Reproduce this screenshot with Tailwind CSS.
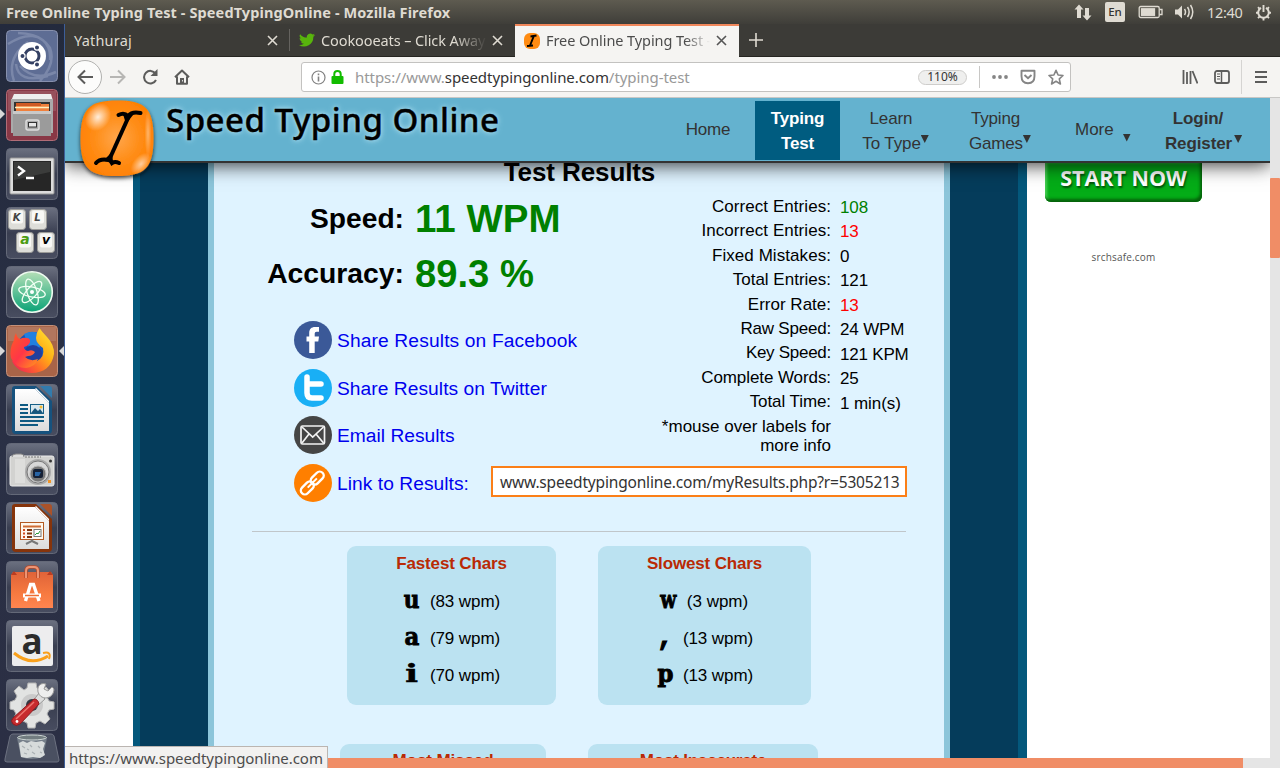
<!DOCTYPE html>
<html lang="en">
<head>
<meta charset="utf-8">
<title>Free Online Typing Test - SpeedTypingOnline</title>
<script src="https://cdn.jsdelivr.net/npm/@tailwindcss/browser@4"></script>
</head>
<body class="w-[1280px] h-[768px] overflow-hidden bg-white text-black font-['Noto_Sans',sans-serif]">
<div class="flex h-[768px] w-[1280px] flex-col">

<!-- System bar -->
<header class="flex h-6 shrink-0 items-center justify-between bg-linear-to-b from-[#5e5b50] to-[#3f3e39] pl-[6px] pr-2 text-[#dfdbd2]">
  <div class="whitespace-nowrap text-[14.500px] leading-6 font-bold tracking-[0.110px]">Free Online Typing Test - SpeedTypingOnline - Mozilla Firefox</div>
  <div class="flex items-center">
    <svg class="mr-[12px] h-5 w-5" viewBox="0 0 20 20" fill="#dfdbd2"><path d="M6 2.500L1.500 7.500H4V16H8V7.500H10.500ZM14 18.500L9.500 13.500H12V6H16V13.500H18.500Z"/></svg>
    <div class="mr-[13px] flex h-5 w-5 items-center justify-center rounded-[2px] bg-[#dfdbd2] text-[11.500px] font-medium text-[#33322e]">En</div>
    <svg class="mr-[11px] h-4 w-[25px]" viewBox="0 0 25 16" fill="none" stroke="#dfdbd2" stroke-width="1.300"><rect x="1.200" y="2.500" width="20" height="11" rx="1.500"/><path d="M21.500 5.500H24V10.500H21.500"/><rect x="3.500" y="4.800" width="13" height="6.500" fill="#dfdbd2"/></svg>
    <svg class="mr-[12px] h-[18px] w-[21px]" viewBox="0 0 21 18"><path d="M1 6.500H4L8 2.500V15.500L4 11.500H1Z" fill="#dfdbd2"/><path d="M10.500 6Q12.500 9 10.500 12M13.500 4Q16.800 9 13.500 14M16.500 2Q21 9 16.500 16" fill="none" stroke="#dfdbd2" stroke-width="1.500"/></svg>
    <div class="mr-[12px] w-[36px] text-[14.500px] leading-6 whitespace-nowrap tracking-[-0.300px]">12:40</div>
    <svg class="h-[17px] w-[17px]" viewBox="0 0 17 17" fill="none" stroke="#dfdbd2"><path d="M6 3.800A5.300 5.300 0 1 0 11 3.800" stroke-width="2"/><path d="M8.500 1V8M1 8.700H3.500M13.500 8.700H16M3 3.200L4.600 4.800M14 3.200L12.400 4.800M3 14.200L4.800 12.400M14 14.200L12.200 12.400M8.500 13.500V16.500" stroke-width="1.900"/></svg>
  </div>
</header>

<div class="flex min-h-0 flex-1">

<!-- Launcher -->
<nav class="relative flex w-[65px] shrink-0 flex-col items-center gap-[7px] border-r border-[#3d5e99] bg-linear-to-b from-[#232a3d] via-[#2a3045] to-[#2b2f44] pt-[6px]">
  <svg class="h-[52px] w-[52px] shrink-0" viewBox="0 0 52 52">
    <defs>
      <linearGradient id="tile" x1="0" y1="0" x2="0" y2="1"><stop offset="0" stop-color="#6b7080"/><stop offset=".45" stop-color="#3f4456"/><stop offset=".5" stop-color="#393e50"/><stop offset="1" stop-color="#484d60"/></linearGradient>
      <linearGradient id="paper" x1="0" y1="0" x2="0" y2="1"><stop offset="0" stop-color="#fff"/><stop offset="1" stop-color="#dcdcdc"/></linearGradient>
    </defs>
    <rect x=".5" y=".5" width="51" height="51" rx="4" fill="#5e6d94" stroke="#8790ad"/>
    <path d="M2 14Q30 -4 44 18Q50 34 34 51M8 51Q0 28 22 12M12 3Q46 4 44 30M50 42Q28 52 14 36M10 34Q12 54 42 46" fill="none" stroke="#a6afc7" stroke-opacity=".4" stroke-width="2.500"/>
    <circle cx="26" cy="26" r="14" fill="#fff"/><circle cx="26" cy="26" r="7" fill="none" stroke="#344063" stroke-width="3"/><g fill="#344063" stroke="#fff" stroke-width="1.200"><circle cx="16.500" cy="26" r="2.600"/><circle cx="31" cy="17.500" r="2.600"/><circle cx="31" cy="34.500" r="2.600"/></g>
  </svg>
  <svg class="h-[52px] w-[52px] shrink-0" viewBox="0 0 52 52">
    <rect x=".5" y=".5" width="51" height="51" rx="4" fill="#893846" stroke="#b16c77"/><path d="M2 2H50V22H2Z" fill="#fff" opacity=".12"/>
    <path d="M8 5H45L47 12H5Z" fill="#eee"/><path d="M5 10H47V44H5Z" fill="#aaa"/><path d="M8 13H44V23H8Z" fill="#333"/><path d="M10 15H43V22H10Z" fill="#f0803c"/><path d="M10 14H35V17H10Z" fill="#cf5a24"/><path d="M9 18.500H43" stroke="#fff0c0" stroke-width="1.500"/><rect x="7" y="22" width="38" height="25" fill="#9b9b9b"/><path d="M7 22H45V25H7Z" fill="#c9c9c9"/><rect x="20" y="31" width="13" height="10" rx="2" fill="#ababab" stroke="#ddd" stroke-width="1.500"/><rect x="22.500" y="33.500" width="8" height="4.500" fill="#e7e7e7" stroke="#333"/>
  </svg>
  <svg class="h-[52px] w-[52px] shrink-0" viewBox="0 0 52 52">
    <rect x=".5" y=".5" width="51" height="51" rx="4" fill="url(#tile)" stroke="#646978"/><rect x="4" y="10" width="44" height="36" rx="1" fill="#dcdcdc" stroke="#999"/><rect x="7" y="13" width="38" height="30" fill="#262626"/><path d="M8 14H44V24L8 32Z" fill="#3b3c3b"/><path d="M12 18.500L18 23L12 27.500M20 30H28" fill="none" stroke="#fff" stroke-width="2.300"/>
  </svg>
  <svg class="h-[52px] w-[52px] shrink-0" viewBox="0 0 52 52">
    <rect x=".5" y=".5" width="51" height="51" rx="4" fill="url(#tile)" stroke="#646978"/>
    <g fill="#deded9" stroke="#9b9b98"><rect x="2.500" y="2.500" width="17" height="20" rx="3"/><rect x="23.500" y="2.500" width="17" height="20" rx="3"/><rect x="10.500" y="25.500" width="17" height="20" rx="3"/><rect x="31.500" y="25.500" width="17" height="20" rx="3"/></g>
    <g fill="#f8f8f5"><rect x="5" y="3.500" width="12" height="13" rx="2"/><rect x="26" y="3.500" width="12" height="13" rx="2"/><rect x="13" y="26.500" width="12" height="14" rx="2"/><rect x="34" y="26.500" width="12" height="14" rx="2"/></g>
    <g font-family="DejaVu Sans" font-style="italic" font-weight="bold" fill="#444" text-anchor="middle"><text x="10.500" y="13.500" font-size="10">K</text><text x="31.500" y="13.500" font-size="10">L</text><text x="19" y="36.500" font-size="14" fill="#4b9c12">a</text><text x="40" y="36.500" font-size="12.500" fill="#000">v</text></g>
  </svg>
  <svg class="h-[52px] w-[52px] shrink-0" viewBox="0 0 52 52">
    <defs><linearGradient id="atom" x1="0" y1="0" x2="0" y2="1"><stop offset="0" stop-color="#b5dfb7"/><stop offset="1" stop-color="#0aa376"/></linearGradient></defs>
    <rect x=".5" y=".5" width="51" height="51" rx="4" fill="url(#tile)" stroke="#646978"/><circle cx="26" cy="26" r="20.300" fill="url(#atom)" stroke="#eefaf0" stroke-width="1.600"/><g fill="none" stroke="#f2fff4" stroke-width="1.300"><ellipse cx="26" cy="26" rx="13.500" ry="5" transform="rotate(12 26 26)"/><ellipse cx="26" cy="26" rx="13.500" ry="5" transform="rotate(72 26 26)"/><ellipse cx="26" cy="26" rx="13.500" ry="5" transform="rotate(132 26 26)"/></g><circle cx="26" cy="26" r="2" fill="#fff"/>
  </svg>
  <svg class="h-[52px] w-[52px] shrink-0" viewBox="0 0 52 52">
    <defs><linearGradient id="fox" x1="1" y1="0" x2="0" y2="1"><stop offset="0" stop-color="#ffed3b"/><stop offset=".4" stop-color="#ffae15"/><stop offset=".65" stop-color="#ff662b"/><stop offset="1" stop-color="#ed155d"/></linearGradient>
    <linearGradient id="foxhead" x1="0" y1="0" x2="1" y2="1"><stop offset="0" stop-color="#ff5b25"/><stop offset=".5" stop-color="#ff3647"/><stop offset="1" stop-color="#ff9a1c"/></linearGradient></defs>
    <rect x=".5" y=".5" width="51" height="51" rx="4" fill="#a86448" stroke="#c39079"/><path d="M2 2H50V16H2Z" fill="#fff" opacity=".12"/>
    <circle cx="27" cy="23" r="16" fill="#1456c0"/><path d="M18 9Q30 3 38 13Q35 25 25 28Z" fill="#2180e0"/><circle cx="27" cy="29" r="9" fill="#213f9e"/>
    <path d="M33.500 3Q36 7 41 12Q48.500 20 48 29C46 42 37 48 26 48C16 48 9 43 6 36L18 31Q23 39 31 36Q39 32 37 23Q30 18 30 13Q30 8 33.500 3Z" fill="url(#fox)"/>
    <path d="M10 8Q11 13 14 14Q18 12 23 13.500Q26 17 21 21L18 22Q18 25 22 26Q26 24 29 27Q27 31 22 31L19 32Q24 37 32 34Q29 42 20 43Q10 43 5 33Q3 24 8 15Q8 11 10 8Z" fill="url(#foxhead)"/>
  </svg>
  <svg class="h-[52px] w-[52px] shrink-0" viewBox="0 0 52 52">
    <rect x=".5" y=".5" width="51" height="51" rx="4" fill="url(#tile)" stroke="#646978"/><path d="M9 2H30L46 17V46Q46 50 42 50H10Q6 50 6 46V5Q6 2 9 2Z" fill="#16527e"/><path d="M34 2H43Q46 2 46 5V14Z" fill="#327bad"/><path d="M9 5H29L43 19V47H9Z" fill="url(#paper)"/><path d="M29 5L43 19V17L30 4Z" fill="#fff"/><path d="M14 21H22M14 25H22M14 29H22M14 33H38M14 37H38M14 41H32" stroke="#0e5a82" stroke-width="2"/><rect x="24.500" y="20.500" width="13" height="9" fill="#d8e7ee" stroke="#176087"/><path d="M25 29L29 24L32 27L34 25L37 29Z" fill="#17557b"/><circle cx="35" cy="23" r="1.500" fill="#f6b930"/>
  </svg>
  <svg class="h-[52px] w-[52px] shrink-0" viewBox="0 0 52 52">
    <rect x=".5" y=".5" width="51" height="51" rx="4" fill="url(#tile)" stroke="#646978"/><rect x="4" y="13" width="44" height="30" rx="2" fill="#d2d2d0" stroke="#ececec"/><path d="M6 14Q6 11 10 11H15Q18 11 18 14" fill="#ddd" stroke="#888"/><path d="M19 14H35" stroke="#777" stroke-dasharray="2 1"/><rect x="9" y="16" width="10" height="24" fill="#dededc"/><circle cx="32" cy="29" r="13" fill="#aaa"/><circle cx="32" cy="29" r="11" fill="#d8d8d8" stroke="#777"/><circle cx="32" cy="31" r="8" fill="#777" stroke="#bbb"/><rect x="27" y="26" width="10" height="9" rx="2" fill="#152035"/><path d="M29 29H35L33 33H29Z" fill="#2864a5"/><circle cx="44.500" cy="18" r="1.500" fill="#333"/><rect x="42" y="37" width="3" height="3" fill="#f29527"/>
  </svg>
  <svg class="h-[52px] w-[52px] shrink-0" viewBox="0 0 52 52">
    <rect x=".5" y=".5" width="51" height="51" rx="4" fill="url(#tile)" stroke="#646978"/><path d="M9 2H30L46 17V46Q46 50 42 50H10Q6 50 6 46V5Q6 2 9 2Z" fill="#86340b"/><path d="M34 2H43Q46 2 46 5V14Z" fill="#aa5229"/><path d="M9 5H29L43 19V47H9Z" fill="url(#paper)"/><path d="M29 5L43 19V17L30 4Z" fill="#fff"/><rect x="14.500" y="20.500" width="23" height="17" fill="#fff8ee" stroke="#b35a22"/><path d="M17 24.500H35" stroke="#cf6d35" stroke-width="2"/><path d="M17 28H19M17 31.500H19M17 35H19" stroke="#d34d20" stroke-width="2"/><path d="M21 28H26M21 31.500H26M21 35H26" stroke="#7e360e" stroke-width="2"/><rect x="28" y="27.500" width="7" height="7" fill="#fff" stroke="#777"/><path d="M29 33L31 31L32 32L34 29" fill="none" stroke="#2a9d3c"/><path d="M26 37V39L20 42M26 39L32 42" fill="none" stroke="#777" stroke-width="2"/>
  </svg>
  <svg class="h-[52px] w-[52px] shrink-0" viewBox="0 0 52 52">
    <defs><linearGradient id="bag" x1="0" y1="0" x2="0" y2="1"><stop offset="0" stop-color="#df6339"/><stop offset=".6" stop-color="#f77a40"/><stop offset="1" stop-color="#ff8550"/></linearGradient></defs>
    <rect x=".5" y=".5" width="51" height="51" rx="4" fill="url(#tile)" stroke="#646978"/><path d="M7 11H45L47 14V47H5V14Z" fill="url(#bag)"/><path d="M5 14L8 10L11 14ZM41 14L44 10L47 14Z" fill="#b93c21"/><path d="M20 17V10Q20 6 24 6H28Q32 6 32 10V17" fill="none" stroke="#b44b2d" stroke-width="3.500"/><path d="M20 17V10Q20 6 24 6H28Q32 6 32 10V17" fill="none" stroke="#ee9473" stroke-width="2"/><path d="M19.500 40L24.500 23.500H27.500L33 40" fill="none" stroke="#fff" stroke-width="3.300"/><path d="M17 34.500H35" stroke="#fff" stroke-width="4"/><path d="M19 34.500H33" stroke="#ee6d32" stroke-width="1.500"/>
  </svg>
  <svg class="h-[52px] w-[52px] shrink-0" viewBox="0 0 52 52">
    <rect x=".5" y=".5" width="51" height="51" rx="4" fill="url(#tile)" stroke="#646978"/><rect x="6" y="6" width="41" height="40" rx="2" fill="#ededee"/><text x="26" y="33.500" text-anchor="middle" font-family="Open Sans" font-size="35" font-weight="bold" fill="#2c2c2c">a</text><path d="M8 33Q25 47 42 36" fill="none" stroke="#f9a01b" stroke-width="3"/><path d="M37 33Q46 31 43 39" fill="none" stroke="#f9a01b" stroke-width="2"/>
  </svg>
  <svg class="h-[52px] w-[52px] shrink-0" viewBox="0 0 52 52">
    <rect x=".5" y=".5" width="51" height="51" rx="4" fill="url(#tile)" stroke="#646978"/><path d="M22 4H30L31 9L35 11L40 8L44 13L41 18L43 22L48 23V30L43 31L41 35L44 40L39 45L34 42L30 44L29 49H22L21 44L17 42L12 45L7 40L10 35L8 31L4 30V23L9 21L11 17L8 12L13 7L18 11L21 9Z" fill="#e2e3e2" stroke="#b3b3b3"/><circle cx="26" cy="26" r="11" fill="#cacaca"/><circle cx="26" cy="26" r="6" fill="#333742"/><path d="M33 14L24 26L28 30L39 20Z" fill="#ddd" stroke="#999"/><path d="M35 5Q31 7 32 13Q34 19 40 19Q47 18 48 11Q48 9 46 8L42 12L38 10L40 5Q37 4 35 5Z" fill="#eee" stroke="#999"/><path d="M7 39L28 20Q32 20 33 25L14 45Q10 48 7 45Q4 42 7 39Z" fill="#c72b2e" stroke="#8c1c20"/><path d="M10 40L28 23" stroke="#ed7770" stroke-width="1.500"/><circle cx="11" cy="42.500" r="1.400" fill="#fff"/>
  </svg>
  <svg class="-mt-[5px] h-[32px] w-[58px] shrink-0" viewBox="0 0 58 32">
    <path d="M10 1H48Q50 1 51 3L56 27Q56 29 54 29H4Q1 29 2 26L7 3Q8 1 10 1Z" fill="#4a5061" stroke="#6c7180"/><path d="M14 5L18 24Q28 28 40 24L44 5Z" fill="#87919a" opacity=".7"/><ellipse cx="29" cy="4.500" rx="14.500" ry="2.500" fill="#727d80" stroke="#cbd4d2"/><path d="M16 10L20 8L24 10L28 8L33 9L39 8L42 10L40 16L42 22L37 25L30 24L24 25L18 24L17 17Z" fill="#d7dbdb"/><path d="M19 13L22 15M21 20L24 21M27 12L29 14M29 19L32 21M35 13L37 15M37 19L39 20M24 16L26 17" fill="none" stroke="#aab0b3" stroke-width="1.200"/>
  </svg>
  <svg class="absolute top-[84px] left-0 h-3 w-[6px]" viewBox="0 0 6 12"><path d="M0 1L5 6L0 11Z" fill="#d8d8d8"/></svg>
  <svg class="absolute top-[321px] left-0 h-3 w-[6px]" viewBox="0 0 6 12"><path d="M0 1L5 6L0 11Z" fill="#d8d8d8"/></svg>
  <svg class="absolute top-[321px] right-0 h-3 w-[6px]" viewBox="0 0 6 12"><path d="M6 1L1 6L6 11Z" fill="#d8d8d8"/></svg>
</nav>

<!-- Browser window -->
<main class="relative flex min-w-0 flex-1 flex-col">

  <!-- Tabs -->
  <div class="flex h-[33px] shrink-0 border-b border-[#262521] bg-[#3c3b37] text-[14.500px] leading-[33px] whitespace-nowrap text-[#dfdbd2]">
    <div class="flex w-[224px] items-center pr-[11px] pl-[9px]">
      <span class="flex-1 tracking-[0.200px]">Yathuraj</span>
      <svg class="h-[11px] w-[11px]" viewBox="0 0 11 11" stroke="#dfdbd2" stroke-width="1.600"><path d="M1 1L10 10M10 1L1 10"/></svg>
    </div>
    <div class="my-[5px] w-px bg-[#65635f]"></div>
    <div class="flex w-[224px] items-center pr-[11px] pl-[9px]">
      <svg class="mr-[6px] h-4 w-4 shrink-0" viewBox="0 0 24 24" fill="#58b40c"><path d="M24 4.600a10 10 0 0 1-2.800.8 5 5 0 0 0 2.200-2.700 10 10 0 0 1-3.100 1.200 4.900 4.900 0 0 0-8.400 4.500A14 14 0 0 1 1.700 3.200a4.900 4.900 0 0 0 1.500 6.500 5 5 0 0 1-2.200-.6 4.900 4.900 0 0 0 4 4.900 5 5 0 0 1-2.300.1 4.900 4.900 0 0 0 4.600 3.400A10 10 0 0 1 0 19.500 14 14 0 0 0 21.500 7.100 10 10 0 0 0 24 4.600z"/></svg>
      <span class="min-w-0 flex-1 overflow-hidden mask-r-from-80% tracking-[-0.100px]">Cookooeats – Click Away</span>
      <svg class="ml-[5px] h-[11px] w-[11px] shrink-0" viewBox="0 0 11 11" stroke="#dfdbd2" stroke-width="1.600"><path d="M1 1L10 10M10 1L1 10"/></svg>
    </div>
    <div class="-mb-px ml-px flex w-[224px] items-center border-t-2 border-[#f0875b] bg-[#f5f4f2] pr-[12px] pl-[9px] leading-[30px] text-[#4c4c4c]">
      <svg class="mr-[6px] mb-[2px] h-4 w-4 shrink-0" viewBox="0 0 16 16"><rect width="16" height="16" rx="6" fill="#ff8b12"/><path d="M6.500 3.500L12.500 2.500M9.800 3.200L6 12.500M3 13L9 12.500" stroke="#000" stroke-width="1.900"/></svg>
      <span class="mb-[3px] min-w-0 flex-1 overflow-hidden mask-r-from-85% tracking-[-0.080px]">Free Online Typing Test -</span>
      <svg class="mb-[2px] ml-[6px] h-[11px] w-[11px] shrink-0" viewBox="0 0 11 11" stroke="#555" stroke-width="1.600"><path d="M1 1L10 10M10 1L1 10"/></svg>
    </div>
    <svg class="mt-[9px] ml-[10px] h-[14px] w-[14px]" viewBox="0 0 14 14" stroke="#dfdbd2" stroke-width="1.600"><path d="M7 0V14M0 7H14"/></svg>
  </div>

  <!-- Navigation toolbar -->
  <div class="flex h-[41px] shrink-0 items-center border-b border-[#c8c7c5] bg-[#f5f4f2]">
    <div class="ml-[3px] flex h-[34px] w-[34px] items-center justify-center rounded-full border border-[#b1b1af] bg-[#fcfcfb]"><svg class="h-4 w-4" viewBox="0 0 16 16" fill="none" stroke="#5c5c5b" stroke-width="2"><path d="M16 8H1.500M8 1.500L1.500 8L8 14.500"/></svg></div>
    <svg class="ml-[8px] h-4 w-4" viewBox="0 0 16 16" fill="none" stroke="#b7b6b4" stroke-width="2"><path d="M0 8H14.500M8 1.500L14.500 8L8 14.500"/></svg>
    <svg class="ml-[16px] h-4 w-4" viewBox="0 0 16 16" fill="none" stroke="#5c5c5b" stroke-width="2"><path d="M13.500 4.500A6.300 6.300 0 1 0 14 11"/><path d="M15.500 0V7H8.500Z" fill="#5c5c5b" stroke="none"/></svg>
    <svg class="ml-[16px] h-4 w-4" viewBox="0 0 16 16"><path d="M1 8.300L8 1.500L15 8.300M3 7.500V14.800H13V7.500" fill="none" stroke="#5c5c5b" stroke-width="2" stroke-linejoin="round"/><path d="M6 9H10V15H6Z" fill="#5c5c5b"/><path d="M8.200 11H9V12.500H8.200Z" fill="#fff"/></svg>
    <div class="ml-[111px] flex h-[30px] w-[770px] items-center rounded-[3px] border border-[#c3c2c0] bg-white pl-[9px]">
      <svg class="h-[15px] w-[15px]" viewBox="0 0 15 15" fill="none" stroke="#828282"><circle cx="7.500" cy="7.500" r="6.500" stroke-width="1.200"/><path d="M7.500 6.500V11.500M7.500 3.500V5.200" stroke-width="1.600"/></svg>
      <svg class="ml-[5px] h-[14px] w-[13px]" viewBox="0 0 13 14"><rect x=".5" y="6" width="12" height="8" rx="1" fill="#12bc00"/><path d="M3.300 7V4Q3.300 1 6.500 1Q9.700 1 9.700 4V7" fill="none" stroke="#12bc00" stroke-width="2"/></svg>
      <div class="ml-[11px] w-[560px] text-[15px] tracking-[-0.060px] whitespace-nowrap text-[#999]">https://www.<span class="text-[#333]">speedtypingonline.com</span>/typing-test</div>
      <div class="ml-[3px] flex h-[15px] w-[49px] items-center justify-center rounded-full border border-[#cecdcb] bg-[#efefee] text-[12px] text-[#333]">110%</div>
      <div class="ml-[12px] h-[22px] w-px bg-[#c8c7c5]"></div>
      <svg class="ml-[12px] h-4 w-4" viewBox="0 0 16 16" fill="#858585"><circle cx="2" cy="8" r="1.900"/><circle cx="8" cy="8" r="1.900"/><circle cx="14" cy="8" r="1.900"/></svg>
      <svg class="ml-[12px] h-4 w-4" viewBox="0 0 16 16" fill="none" stroke="#858585" stroke-width="1.900"><path d="M1.500 1.800H14.500V7Q14.500 14.200 8 14.200Q1.500 14.200 1.500 7Z" stroke-linejoin="round"/><path d="M4.500 6L8 9.300L11.500 6"/></svg>
      <svg class="ml-[12px] h-[17px] w-4" viewBox="0 0 16 17" fill="none" stroke="#858585" stroke-width="1.600" stroke-linejoin="round"><path d="M8 1.300L10.100 6L15 6.500L11.300 9.900L12.400 15L8 12.300L3.600 15L4.700 9.900L1 6.500L5.900 6Z"/></svg>
    </div>
    <svg class="ml-[111px] h-4 w-4" viewBox="0 0 16 16" stroke="#5c5c5b" stroke-width="1.800"><path d="M1.500 1V15M5 3V15M8.500 2V15M10.500 2L15.500 14.500"/></svg>
    <svg class="ml-[16px] h-4 w-4" viewBox="0 0 16 16" fill="none" stroke="#5c5c5b" stroke-width="1.800"><rect x="1" y="2" width="14" height="12" rx="2"/><path d="M7.500 2V14" stroke-width="1.500"/><path d="M3 5H6M3 7.500H6M3 10H6" stroke-width="1"/></svg>
    <div class="ml-[11px] h-[34px] w-px bg-[#d5d4d2]"></div>
    <svg class="ml-[12px] h-4 w-[14px]" viewBox="0 0 14 16" stroke="#5c5c5b" stroke-width="2"><path d="M1 3H13M1 8H13M1 13H13"/></svg>
  </div>

  <!-- Page viewport -->
  <div class="flex min-h-0 flex-1 flex-col">
    <div class="flex min-h-0 flex-1">
      <div class="relative flex min-w-0 flex-1 flex-col overflow-hidden font-['Liberation_Sans',Arial,sans-serif]">

        <!-- Site header -->
        <div class="relative z-10 flex h-[65px] shrink-0 border-b-2 border-[#333] bg-[#64b2cf] text-[17px] leading-[25px] text-[#333] shadow-[0_2px_18px_rgba(0,0,0,0.8)]">
          <svg class="-mb-5 ml-[10px] h-[90px] w-[85px] shrink-0" viewBox="0 0 85 90">
            <defs>
              <radialGradient id="orb" cx=".5" cy=".5" r=".65"><stop offset="0" stop-color="#ffa64b"/><stop offset=".5" stop-color="#ff8c15"/><stop offset=".9" stop-color="#ff7e00"/></radialGradient>
              <radialGradient id="gl"><stop offset="0" stop-color="#fff" stop-opacity=".85"/><stop offset="1" stop-color="#fff" stop-opacity="0"/></radialGradient>
              <filter id="drop" x="-20%" y="-20%" width="140%" height="140%"><feDropShadow dx="0" dy="2" stdDeviation="2" flood-color="#000" flood-opacity=".75"/></filter>
            </defs>
            <path d="M42 2.500C69 2.500 78.500 9 78.500 40C78.500 70 70 78 42 78C15 78 5.500 71 5.500 41C5.500 10 15 2.500 42 2.500Z" fill="url(#orb)" filter="url(#drop)"/>
            <ellipse cx="23" cy="19" rx="12" ry="15" fill="url(#gl)" transform="rotate(35 23 19)"/><ellipse cx="66" cy="66" rx="8" ry="13" fill="url(#gl)" opacity=".7" transform="rotate(40 66 66)"/><ellipse cx="73" cy="35" rx="3.500" ry="25" fill="url(#gl)" opacity=".45"/>
            <path d="M53.500 19L35 60" stroke="#000" stroke-width="4"/><path d="M43.500 17Q49 14 53 18Q57 13 65.500 15M21 65Q25 60 34 62Q36 63 37 65Q40 63 44 65" fill="none" stroke="#000" stroke-width="4" stroke-linecap="round"/><path d="M48 16L58 17L51 26ZM37 54L38 64L28 63Z" fill="#000"/>
          </svg>
          <div class="ml-[6px] w-[515px] text-[33px] leading-[43px] font-medium tracking-[0.500px] whitespace-nowrap text-black [text-shadow:0_0_4px_#a9dcee,0_0_7px_#a9dcee] [-webkit-text-stroke:0.400px_#000] font-['Noto_Sans',sans-serif]">Speed Typing Online</div>
          <div class="-ml-[13px] flex w-[92px] items-center justify-center pr-[12px]"><span class="tracking-[-0.200px]">Home</span></div>
          <div class="mt-[3px] mb-px -ml-[5px] w-[85px] bg-[#005c80] pt-[5px] text-center font-bold tracking-[-0.200px] text-white">Typing<br>Test</div>
          <div class="w-[110px] pt-[8px] pr-[8px] text-center tracking-[-0.100px]">Learn<br><span class="-mr-[9px] whitespace-nowrap">To Type<span class="inline-block h-2 w-2 -translate-y-[6px] bg-[#333] [clip-path:polygon(0_0,100%_0,50%_100%)]"></span></span></div>
          <div class="w-[99px] pt-[8px] pr-[8px] text-center tracking-[-0.200px]">Typing<br><span class="-mr-[9px] whitespace-nowrap">Games<span class="inline-block h-2 w-2 -translate-y-[6px] bg-[#333] [clip-path:polygon(0_0,100%_0,50%_100%)]"></span></span></div>
          <div class="flex w-[83px] items-center pl-[26px]"><span>More</span><span class="mt-4 ml-[9px] h-2 w-2 shrink-0 bg-[#333] [clip-path:polygon(0_0,100%_0,50%_100%)]"></span></div>
          <div class="w-[110px] shrink-0 pt-[8px] pl-[22px] text-center font-bold tracking-[-0.100px]">Login/<br><span class="-mr-[11px] whitespace-nowrap">Register<span class="ml-[2px] inline-block h-2 w-2 -translate-y-[6px] bg-[#333] [clip-path:polygon(0_0,100%_0,50%_100%)]"></span></span></div>
        </div>

        <div class="flex min-h-0 flex-1">
          <div class="w-[68px] shrink-0 bg-white"></div>
          <div class="w-[75px] shrink-0 border-l-[7px] border-[#04587c] bg-[#053c5b]"></div>

          <!-- Results -->
          <div class="flex w-[742px] shrink-0 flex-col overflow-hidden border-x-[6px] border-[#8cc5da] bg-[#dff3ff]">
            <h1 class="-mt-[6px] pl-[1px] text-center text-[26px] leading-[30px] font-bold tracking-[-0.100px]">Test Results</h1>
            <div class="flex h-[344px] shrink-0">
              <div class="flex w-[422px] shrink-0 flex-col">
                <div class="mt-[4px] flex h-[55px] items-center font-bold"><div class="w-[190px] text-right text-[28.200px]">Speed:</div><div class="ml-[11px] text-[38.500px] text-[#008000]">11 WPM</div></div>
                <div class="flex h-[55px] items-center font-bold"><div class="w-[190px] text-right text-[28.300px]">Accuracy:</div><div class="ml-[11px] text-[38.200px] text-[#008000]">89.3 %</div></div>
                <div class="mt-[15px] ml-[80px] flex flex-col text-[19.200px] tracking-[0.140px] whitespace-nowrap text-[#0000ee]">
                  <div class="flex h-[48px] items-center gap-[5px]"><svg class="h-[38px] w-[38px]" viewBox="0 0 38 38"><circle cx="19" cy="19" r="19" fill="#3b5998"/><path d="M15.200 32V20.500H12.500V15.500H15.200V12C15.200 8 17.500 6 21 6H25V10.700H22.500Q20.700 10.700 20.700 12.500V15.500H25L24.300 20.500H20.700V32Z" fill="#fff"/></svg><span class="pt-[2px]">Share Results on Facebook</span></div>
                  <div class="flex h-[47px] items-center gap-[5px]"><svg class="h-[38px] w-[38px]" viewBox="0 0 38 38"><circle cx="19" cy="19" r="19" fill="#19aff5"/><path d="M13 8V24Q13 29 18 29H27M13 15H27" fill="none" stroke="#fff" stroke-width="5.500" stroke-linecap="round" stroke-linejoin="round"/></svg><span class="pt-[3px] tracking-[0.050px]">Share Results on Twitter</span></div>
                  <div class="flex h-[48px] items-center gap-[5px]"><svg class="h-[38px] w-[38px]" viewBox="0 0 38 38"><circle cx="19" cy="19" r="19" fill="#454545"/><g fill="none" stroke="#f2f2f2" stroke-width="1.700"><rect x="7" y="10" width="23.500" height="18" rx="1.500"/><path d="M8 11L18.700 21L29.500 11M8 27L15 18M29.500 27L22 18"/></g></svg><span class="pt-[2px] tracking-[0.020px]">Email Results</span></div>
                  <div class="flex h-[48px] items-center gap-[5px]"><svg class="h-[38px] w-[38px]" viewBox="0 0 38 38"><circle cx="19" cy="19" r="19" fill="#ff7f00"/><g fill="none" stroke="#fff" stroke-width="2.400" transform="rotate(-45 19 19)"><rect x="4" y="14.500" width="15" height="8" rx="4"/><rect x="18" y="14.500" width="15" height="8" rx="4"/><path d="M12 18.500H25" stroke-width="2"/></g></svg><span class="pt-[2px] tracking-[0.050px]">Link to Results:</span></div>
                </div>
              </div>
              <div class="-ml-[145px] flex w-[416px] flex-col">
                <div class="flex justify-end pt-[8px] text-[17px] tracking-[-0.080px] whitespace-nowrap">
                  <div class="text-right leading-[24.400px]">
                    <div class="tracking-[0.060px]">Correct Entries:</div><div class="tracking-[0.060px]">Incorrect Entries:</div><div class="tracking-[0.060px]">Fixed Mistakes:</div><div class="tracking-normal">Total Entries:</div><div class="tracking-normal">Error Rate:</div><div class="tracking-[-0.200px]">Raw Speed:</div><div class="tracking-[-0.280px]">Key Speed:</div><div>Complete Words:</div><div>Total Time:</div>
                    <div class="mt-[2px] leading-[19.500px] tracking-normal">*mouse over labels for<br>more info</div>
                  </div>
                  <div class="ml-[9px] w-[67px] leading-[24.500px] pt-[0.500px]">
                    <div class="text-[#008000]">108</div><div class="text-[#ff0000]">13</div><div>0</div><div>121</div><div class="text-[#ff0000]">13</div><div class="tracking-[-0.150px]">24 WPM</div><div class="tracking-[-0.200px]">121 KPM</div><div>25</div><div>1 min(s)</div>
                  </div>
                </div>
                <div class="mt-[10px] h-[31px] shrink-0 border-2 border-[#fb7f18] bg-white pl-[7px] text-[15.500px] leading-[29px] tracking-[-0.180px] whitespace-nowrap text-[#333] font-['Noto_Sans',sans-serif]">www.speedtypingonline.com/myResults.php?r=5305213</div>
              </div>
            </div>
            <div class="mr-[38px] ml-[38px] h-px shrink-0 bg-[#c0c6ca]"></div>
            <div class="mt-[14px] flex shrink-0 pl-[133px] text-[17px]">
              <div class="h-[159px] w-[209px] rounded-[9px] bg-[#bbe2f1] pt-[8px] text-center">
                <h2 class="leading-[19px] font-bold tracking-[-0.150px] text-[#b92a05]">Fastest Chars</h2>
                <div class="mt-[10px] leading-[37px] whitespace-nowrap">
                  <div class="flex h-[37px] items-center justify-center gap-[10px] pl-px"><b class="flex w-4 justify-center text-[24px] [-webkit-text-stroke:0.900px_#000] font-['DejaVu_Serif',serif]"><span class="-translate-y-[2px] scale-x-90">u</span></b><span class="tracking-[-0.080px]">(83 wpm)</span></div>
                  <div class="flex h-[37px] items-center justify-center gap-[10px] pl-px"><b class="flex w-4 justify-center text-[24px] [-webkit-text-stroke:0.900px_#000] font-['DejaVu_Serif',serif]"><span class="-translate-y-[2px] scale-x-95">a</span></b><span class="tracking-[-0.080px]">(79 wpm)</span></div>
                  <div class="flex h-[37px] items-center justify-center gap-[10px] pl-px"><b class="flex w-4 justify-center text-[24px] [-webkit-text-stroke:0.500px_#000] font-['DejaVu_Serif',serif]"><span class="-translate-y-[2px] scale-x-[1.4]">i</span></b><span class="tracking-[-0.080px]">(70 wpm)</span></div>
                </div>
              </div>
              <div class="ml-[42px] h-[159px] w-[213px] rounded-[9px] bg-[#bbe2f1] pt-[8px] text-center">
                <h2 class="leading-[19px] font-bold tracking-[-0.150px] text-[#b92a05]">Slowest Chars</h2>
                <div class="mt-[10px] leading-[37px] whitespace-nowrap">
                  <div class="flex h-[37px] items-center justify-center gap-[10px]"><b class="flex w-4 justify-center text-[24px] [-webkit-text-stroke:0.900px_#000] font-['DejaVu_Serif',serif]"><span class="-translate-y-[2px] scale-x-[0.78]">w</span></b><span>(3 wpm)</span></div>
                  <div class="flex h-[37px] items-center justify-center gap-[10px] pl-px"><b class="w-4 text-[27px] [-webkit-text-stroke:1px_#000] font-['Liberation_Mono',monospace]">,</b><span class="tracking-[-0.080px]">(13 wpm)</span></div>
                  <div class="flex h-[37px] items-center justify-center gap-[10px] pl-px"><b class="flex w-4 justify-center text-[24px] [-webkit-text-stroke:0.900px_#000] font-['DejaVu_Serif',serif]"><span class="-translate-y-[2px] scale-x-95">p</span></b><span class="tracking-[-0.080px]">(13 wpm)</span></div>
                </div>
              </div>
            </div>
            <div class="mt-[39px] flex shrink-0 pl-[126px] text-center text-[17px] font-bold text-[#b92a05]">
              <div class="h-[60px] w-[206px] rounded-[9px] bg-[#bbe2f1] pt-[7px] leading-[19px] tracking-[-0.100px]">Most Missed</div>
              <div class="ml-[42px] h-[60px] w-[230px] rounded-[9px] bg-[#bbe2f1] pt-[7px] leading-[19px] tracking-[-0.200px]">Most Inaccurate</div>
            </div>
          </div>

          <div class="w-[77px] shrink-0 border-r-[9px] border-[#04587c] bg-[#053c5b]"></div>

          <!-- Advertisement -->
          <div class="flex-1 bg-white pl-[18px] font-['Open_Sans',sans-serif]">
            <div class="h-[39px] w-[157px] rounded-b-[6px] bg-[#04ad17] text-center text-[21.500px] leading-[30px] font-bold tracking-[0] whitespace-nowrap text-white shadow-[inset_-2px_-3px_3px_#05610a,inset_2px_0_3px_#4fd45c] [text-shadow:1px_2px_2px_#00500b]">START NOW</div>
            <div class="mt-[48px] w-[157px] text-center text-[10px] tracking-[0.180px] text-[#555]">srchsafe.com</div>
          </div>
        </div>
      </div>
      <div class="w-[10px] shrink-0 bg-[#e5e5e5] pt-[80px]"><div class="h-[80px] rounded-[1px] bg-[#f08d66]"></div></div>
    </div>
    <div class="h-[10px] shrink-0 bg-[#e5e5e5]"><div class="h-full w-[1178px] bg-[#f08d66]"></div></div>
  </div>

  <!-- Link status -->
  <div class="absolute bottom-0 left-0 z-20 h-[22px] w-[263px] border-t border-r border-[#bbb5b1] bg-[#f2f1f0] pl-[4px] text-[15px] leading-[22px] tracking-[-0.060px] whitespace-nowrap text-[#4c4c4c]">https://www.speedtypingonline.com</div>
</main>
</div>
</div>
</body>
</html>
